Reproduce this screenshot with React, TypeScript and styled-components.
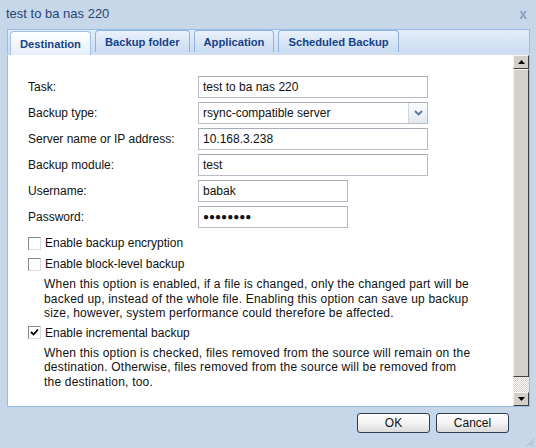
import styled, { createGlobalStyle } from 'styled-components';

const GlobalStyle = createGlobalStyle`
  html, body {
    margin: 0;
    padding: 0;
  }
  body {
    font-family: "Liberation Sans", Arial, sans-serif;
    font-size: 12px;
    color: #111;
  }
`;

const Window = styled.div`
  position: relative;
  width: 536px;
  height: 448px;
  box-sizing: border-box;
  background: #c6d7ea;
  display: flex;
  flex-direction: column;
  padding: 0 6px 0 7px;
`;

const TitleBar = styled.div`
  height: 27px;
  display: flex;
  align-items: center;
  justify-content: space-between;
  font-size: 13px;
  color: #2a4570;
  padding-right: 5px;
  margin-right: -6px;
  margin-left: -1px;
`;

const Close = styled.span`
  color: #8aa0bb;
  font-size: 14px;
  font-weight: bold;
  padding-right: 4px;
`;

const TabStrip = styled.div`
  height: 26px;
  box-sizing: border-box;
  border: 1px solid #99bbe8;
  border-bottom: 3px solid #d0def0;
  background: linear-gradient(#e4edf9, #cbdcf1);
  display: flex;
  align-items: flex-end;
  gap: 4px;
  padding-left: 2px;
  margin-top: 2px;
`;

const Tab = styled.div<{ $active?: boolean }>`
  height: ${p => (p.$active ? 24 : 22)}px;
  box-sizing: border-box;
  display: flex;
  align-items: center;
  padding: 0 9px;
  border: 1px solid ${p => (p.$active ? '#9fc0e6' : '#8db2e3')};
  border-bottom: none;
  border-radius: 4px 4px 0 0;
  background: ${p => (p.$active ? 'linear-gradient(#ffffff, #e4eefb)' : 'linear-gradient(#eaf1fb, #c9dbf1)')};
  font-size: 11.2px;
  font-weight: bold;
  color: #15428b;
  margin-bottom: ${p => (p.$active ? -3 : 0)}px;
`;

const Panel = styled.div`
  height: 352px;
  box-sizing: border-box;
  background: #fff;
  border: 1px solid #99bbe8;
  border-top: none;
  display: flex;
`;

const Content = styled.div`
  flex: 1;
  padding: 21px 0 0 20px;
`;

const FieldGrid = styled.div`
  display: grid;
  grid-template-columns: 170px 230px;
  grid-auto-rows: 22px;
  row-gap: 4px;
  align-items: center;
`;

const Label = styled.div`
  line-height: 22px;
`;

const Input = styled.div<{ $w?: number }>`
  width: ${p => p.$w ?? 230}px;
  height: 22px;
  box-sizing: border-box;
  border: 1px solid #b9bcc6;
  border-top-color: #a9acb6;
  background: #fff;
  padding-left: 4px;
  line-height: 20px;
  display: flex;
  align-items: center;
  justify-content: space-between;
`;

const Dots = styled.span`
  font-size: 10px;
`;

const DropButton = styled.span`
  width: 18px;
  height: 20px;
  border-left: 1px solid #d2d6de;
  background: linear-gradient(#fbfcfe, #e2e8f1);
  display: flex;
  align-items: center;
  justify-content: center;
`;

const CheckRow = styled.label<{ $top?: number }>`
  display: flex;
  align-items: center;
  gap: 4px;
  height: 16px;
  margin-top: ${p => p.$top ?? 4}px;
`;

const Box = styled.span`
  width: 11px;
  height: 11px;
  border: 1px solid #8a8a8a;
  border-right-color: #dcdcdc;
  border-bottom-color: #dcdcdc;
  background: #fff;
  display: inline-flex;
  align-items: center;
  justify-content: center;
`;

const Note = styled.p`
  margin: 5px 0 3px 16px;
  line-height: 14.6px;
  letter-spacing: 0.2px;
  white-space: nowrap;
`;

const ScrollBar = styled.div`
  width: 16px;
  display: flex;
  flex-direction: column;
  border-left: 1px solid #fff;
`;

const ScrollButton = styled.div`
  height: 14px;
  box-sizing: border-box;
  background: #d4d0c8;
  border: 1px solid;
  border-color: #f4f3ef #404040 #404040 #f4f3ef;
  display: flex;
  align-items: center;
  justify-content: center;
`;

const Thumb = styled.div`
  flex: 1;
  background: #d4d0c8;
  border: 1px solid;
  border-color: #f4f3ef #404040 #404040 #f4f3ef;
`;

const Track = styled.div`
  height: 15px;
  background-color: #ffffff;
  background-image: repeating-conic-gradient(#d4d0c8 0 25%, #ffffff 0 50%);
  background-size: 2px 2px;
`;

const Footer = styled.div`
  display: flex;
  justify-content: flex-end;
  gap: 6px;
  padding: 6px 21px 0 0;
`;

const Button = styled.button`
  width: 73px;
  height: 20px;
  border: 1px solid #2b3c55;
  border-radius: 3px;
  background: linear-gradient(#ffffff, #f3f3f3 50%, #dadada);
  font-family: "Liberation Sans", Arial, sans-serif;
  font-size: 12px;
  padding: 0;
  color: #111;
`;

const Grip = styled.svg`
  position: absolute;
  right: 1px;
  bottom: 1px;
`;

function Check({ checked }: { checked?: boolean }) {
  return (
    <Box>
      {checked && (
        <svg width="9" height="9" viewBox="0 0 9 9">
          <path d="M1 4 L3.5 6.5 L8 1.5" stroke="#000" strokeWidth="1.8" fill="none" />
        </svg>
      )}
    </Box>
  );
}

export default function App() {
  return (
    <>
      <GlobalStyle />
      <Window>
        <TitleBar>
          <span>test to ba nas 220</span>
          <Close>x</Close>
        </TitleBar>
        <TabStrip>
          <Tab $active>Destination</Tab>
          <Tab>Backup folder</Tab>
          <Tab>Application</Tab>
          <Tab>Scheduled Backup</Tab>
        </TabStrip>
        <Panel>
          <Content>
            <FieldGrid>
              <Label>Task:</Label>
              <Input>test to ba nas 220</Input>
              <Label>Backup type:</Label>
              <Input>
                rsync-compatible server
                <DropButton>
                  <svg width="9" height="6" viewBox="0 0 9 6">
                    <path d="M1 1 L4.5 4.5 L8 1" stroke="#5a7295" strokeWidth="1.8" fill="none" />
                  </svg>
                </DropButton>
              </Input>
              <Label>Server name or IP address:</Label>
              <Input>10.168.3.238</Input>
              <Label>Backup module:</Label>
              <Input>test</Input>
              <Label>Username:</Label>
              <Input $w={150}>babak</Input>
              <Label>Password:</Label>
              <Input $w={150}><Dots>●●●●●●●●</Dots></Input>
            </FieldGrid>
            <CheckRow $top={7}>
              <Check />
              Enable backup encryption
            </CheckRow>
            <CheckRow $top={5}>
              <Check />
              Enable block-level backup
            </CheckRow>
            <Note>
              When this option is enabled, if a file is changed, only the changed part will be<br />
              backed up, instead of the whole file. Enabling this option can save up backup<br />
              size, however, system performance could therefore be affected.
            </Note>
            <CheckRow>
              <Check checked />
              Enable incremental backup
            </CheckRow>
            <Note>
              When this option is checked, files removed from the source will remain on the<br />
              destination. Otherwise, files removed from the source will be removed from<br />
              the destination, too.
            </Note>
          </Content>
          <ScrollBar>
            <ScrollButton>
              <svg width="7" height="4" viewBox="0 0 7 4"><path d="M0 4 L3.5 0 L7 4 Z" fill="#000" /></svg>
            </ScrollButton>
            <Thumb />
            <Track />
            <ScrollButton>
              <svg width="7" height="4" viewBox="0 0 7 4"><path d="M0 0 L3.5 4 L7 0 Z" fill="#000" /></svg>
            </ScrollButton>
          </ScrollBar>
        </Panel>
        <Footer>
          <Button>OK</Button>
          <Button>Cancel</Button>
        </Footer>
        <Grip width="10" height="10" viewBox="0 0 10 10">
          <path d="M9 2 L2 9 M9 5 L5 9 M9 8 L8 9" stroke="#9fb1c6" strokeWidth="1" />
        </Grip>
      </Window>
    </>
  );
}
